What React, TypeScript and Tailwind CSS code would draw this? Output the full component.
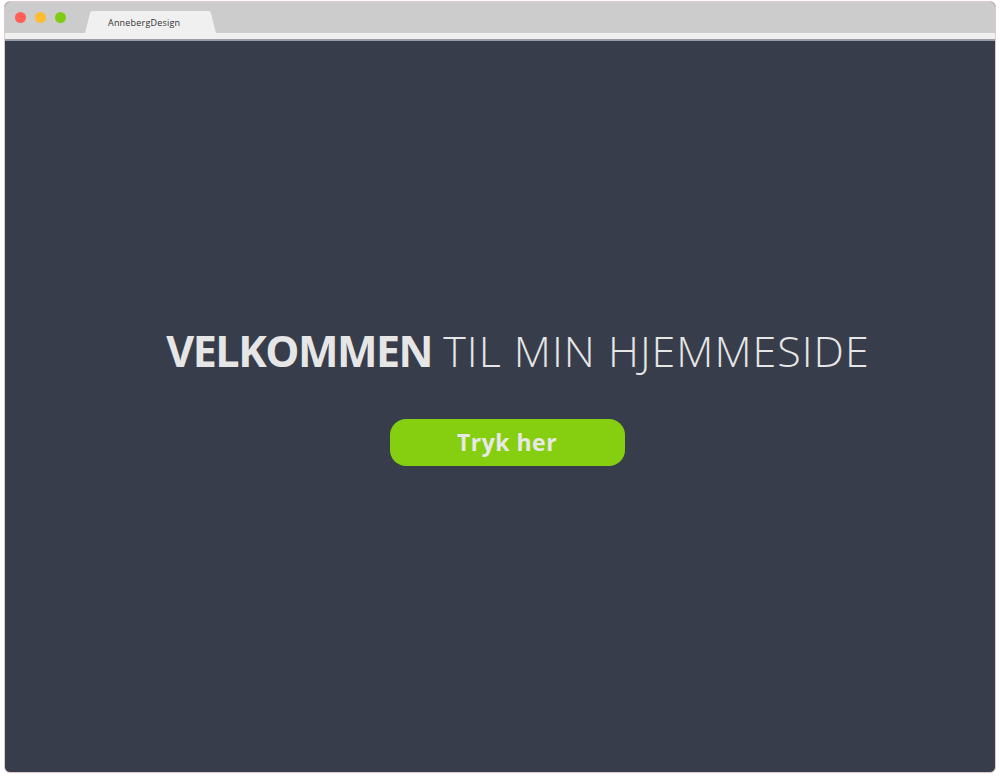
export default function App() {
  return (
    <div className="w-[1000px] h-[776px] bg-white pt-px px-1 pb-[3px]" style={{ fontFamily: '"Open Sans", "Liberation Sans", sans-serif' }}>
      <div className="h-full flex flex-col rounded-md overflow-hidden border border-[#e3c9cc] bg-[#373d4a]">
        {/* title bar */}
        <div className="h-[31px] bg-[#cccccc] flex items-end shrink-0">
          <div className="flex items-center gap-[9px] pl-[10px] self-center">
            <span className="w-[11px] h-[11px] rounded-full bg-[#ff5f57]" />
            <span className="w-[11px] h-[11px] rounded-full bg-[#febc2e]" />
            <span className="w-[11px] h-[11px] rounded-full bg-[#80cc13]" />
          </div>
          <div className="ml-[19px] h-[22px] w-[131px] relative">
            <svg className="absolute inset-0" width="131" height="22" viewBox="0 0 131 22">
              <path d="M0 22 L5 2 Q5.5 0 8 0 L123 0 Q125.5 0 126 2 L131 22 Z" fill="#f0f0f0" />
            </svg>
            <span className="relative flex h-full items-center pl-[23px] text-[9px] tracking-[0.2px] text-[#333] pt-[2px]">AnnebergDesign</span>
          </div>
        </div>
        <div className="h-[6px] bg-[#f0f0f0] shrink-0" />
        <div className="h-[2px] bg-[#9a9ea6] shrink-0" />
        {/* content */}
        <div className="flex-1 flex flex-col items-center pt-[288px]">
          <h1 className="ml-[36px] text-[43px] leading-none text-[#e6e6e6]">
            <span className="font-bold tracking-[-1.5px]">VELKOMMEN</span>{' '}
            <span className="font-light tracking-[1px]">TIL MIN HJEMMESIDE</span>
          </h1>
          <button className="ml-[14px] mt-[47px] w-[235px] h-[47px] rounded-[16px] bg-[#86ce10] text-[#e8e8e8] text-[23px] font-bold tracking-[0.5px]">
            Tryk her
          </button>
        </div>
      </div>
    </div>
  )
}
